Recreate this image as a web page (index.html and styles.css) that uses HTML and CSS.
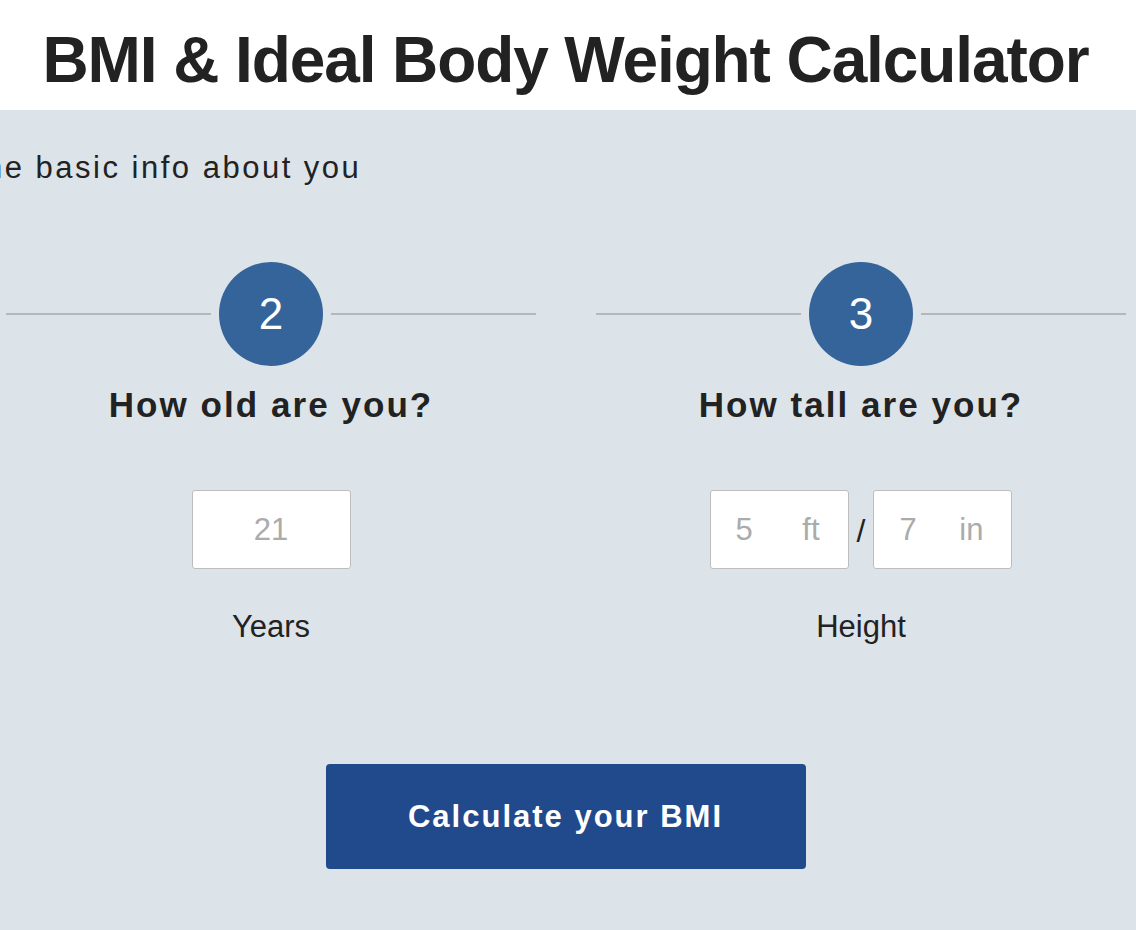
FILE: index.html
```html
<!DOCTYPE html>
<html>
<head>
<meta charset="utf-8">
<link rel="stylesheet" href="styles.css">
</head>
<body>
<header class="header">
  <h1 class="title">BMI &amp; Ideal Body Weight Calculator</h1>
</header>
<main class="panel">
  <p class="intro">ne basic info about you</p>
  <div class="steps">
    <section class="step">
      <div class="step-head">
        <span class="rule"></span>
        <span class="badge">2</span>
        <span class="rule"></span>
      </div>
      <h2 class="question">How old are you?</h2>
      <div class="fields">
        <div class="field field-age"><span class="ph">21</span></div>
      </div>
      <div class="label">Years</div>
    </section>
    <section class="step">
      <div class="step-head">
        <span class="rule"></span>
        <span class="badge">3</span>
        <span class="rule"></span>
      </div>
      <h2 class="question">How tall are you?</h2>
      <div class="fields">
        <div class="field field-unit"><span class="ph">5</span><span class="ph">ft</span></div>
        <span class="slash">/</span>
        <div class="field field-unit"><span class="ph">7</span><span class="ph">in</span></div>
      </div>
      <div class="label">Height</div>
    </section>
  </div>
  <div class="actions">
    <button class="cta">Calculate your BMI</button>
  </div>
</main>
</body>
</html>
```

FILE: styles.css
```css
html, body {
  margin: 0;
  padding: 0;
}
body {
  width: 1136px;
  height: 930px;
  overflow: hidden;
  background: #dce4ea;
  font-family: "Liberation Sans", Arial, sans-serif;
  color: #222;
}
.header {
  background: #fff;
  height: 110px;
  display: flex;
  justify-content: center;
}
.title {
  margin: 0 0 0 -5px;
  padding-top: 23px;
  font-size: 64px;
  line-height: 74px;
  font-weight: 700;
  letter-spacing: -1.1px;
  color: #222;
  white-space: nowrap;
}
.panel {
  padding-top: 40px;
}
.intro {
  margin: 0 0 0 -15px;
  font-size: 31px;
  line-height: 36px;
  letter-spacing: 2.5px;
  color: #222;
  white-space: nowrap;
}
.steps {
  display: flex;
  gap: 60px;
  padding: 76px 0 0 6px;
}
.step {
  width: 530px;
  display: flex;
  flex-direction: column;
  align-items: center;
}
.step-head {
  width: 100%;
  display: flex;
  align-items: center;
  gap: 8px;
}
.rule {
  flex: 1;
  height: 2px;
  background: #b4b8b8;
}
.badge {
  width: 104px;
  height: 104px;
  border-radius: 50%;
  background: #35649a;
  color: #fff;
  font-size: 44px;
  display: flex;
  align-items: center;
  justify-content: center;
}
.question {
  margin: 18px 0 0;
  font-size: 35px;
  line-height: 42px;
  font-weight: 700;
  letter-spacing: 2.05px;
  color: #222;
}
.fields {
  margin-top: 64px;
  display: flex;
  align-items: center;
  gap: 8px;
}
.field {
  background: #fff;
  border: 1.5px solid #bdbdbd;
  border-radius: 3px;
  display: flex;
  align-items: center;
  box-sizing: border-box;
}
.field-age {
  width: 159px;
  height: 79px;
  justify-content: center;
}
.field-unit {
  width: 139px;
  height: 79px;
  justify-content: space-between;
  padding: 0 28px 0 25px;
}
.ph {
  font-size: 31px;
  color: #ababab;
}
.slash {
  font-size: 32px;
  color: #222;
  margin-top: 4px;
}
.label {
  margin-top: 38px;
  font-size: 31px;
  line-height: 40px;
  color: #222;
}
.actions {
  display: flex;
  justify-content: center;
  padding: 117px 5px 0 0;
}
.cta {
  width: 480px;
  height: 105px;
  background: #214a8d;
  border: none;
  border-radius: 4px;
  color: #fff;
  font-family: "Liberation Sans", Arial, sans-serif;
  font-size: 31px;
  font-weight: 700;
  letter-spacing: 2px;
}
```
